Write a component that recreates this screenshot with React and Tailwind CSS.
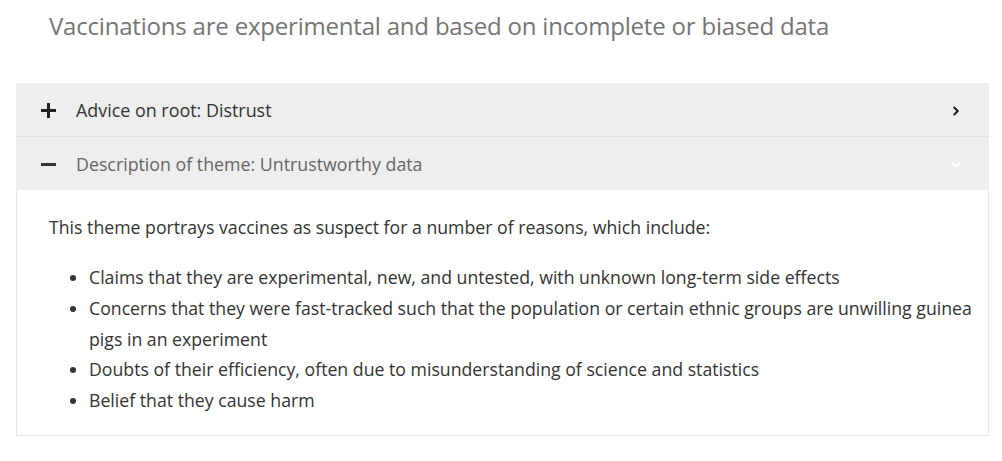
import { ChevronRight, ChevronDown } from 'lucide-react'

const bullets = [
  'Claims that they are experimental, new, and untested, with unknown long-term side effects',
  'Concerns that they were fast-tracked such that the population or certain ethnic groups are unwilling guinea pigs in an experiment',
  'Doubts of their efficiency, often due to misunderstanding of science and statistics',
  'Belief that they cause harm',
]

function PlusIcon() {
  return (
    <svg width="15" height="15" viewBox="0 0 15 15" className="shrink-0">
      <rect x="0" y="6" width="15" height="3" fill="#222" />
      <rect x="6" y="0" width="3" height="15" fill="#222" />
    </svg>
  )
}

function MinusIcon() {
  return (
    <svg width="15" height="15" viewBox="0 0 15 15" className="shrink-0">
      <rect x="0" y="6" width="15" height="3" fill="#333" />
    </svg>
  )
}

export default function App() {
  return (
    <div className="bg-white min-h-[461px] pt-[12px] pl-[16px] pr-[13px]" style={{ fontFamily: '"Open Sans", sans-serif' }}>
      <h1 className="pl-[33px] text-[24px] leading-[28px] text-[#757575] tracking-[-0.2px]">
        Vaccinations are experimental and based on incomplete or biased data
      </h1>

      <div className="mt-[43px]">
        <button type="button" className="w-full h-[53px] flex items-center bg-[#eeeeee] pl-[25px] pr-[26px] pt-[2px] text-left">
          <PlusIcon />
          <span className="ml-[20px] flex-1 text-[17.9px] text-[#333]">Advice on root: Distrust</span>
          <ChevronRight size={14} strokeWidth={3.5} color="#222" />
        </button>
        <div className="h-px bg-[#e2e2e2]" />
        <button type="button" className="w-full h-[53px] flex items-center bg-[#eeeeee] pl-[25px] pr-[26px] pt-[2px] text-left">
          <MinusIcon />
          <span className="ml-[20px] flex-1 text-[17.8px] text-[#666]">Description of theme: Untrustworthy data</span>
          <ChevronDown size={14} strokeWidth={3.5} color="#ffffff" />
        </button>
        <div className="border border-t-0 border-[#e6e6e6] pl-[32px] pr-[14px] pt-[24px] pb-[19px] text-[17.7px] text-[#333]">
          <p className="leading-[26px]">This theme portrays vaccines as suspect for a number of reasons, which include:</p>
          <ul className="mt-[22px] list-disc pl-[40px] leading-[30.75px] marker:text-[#333]">
            {bullets.map((b) => (
              <li key={b}>{b}</li>
            ))}
          </ul>
        </div>
      </div>
    </div>
  )
}
